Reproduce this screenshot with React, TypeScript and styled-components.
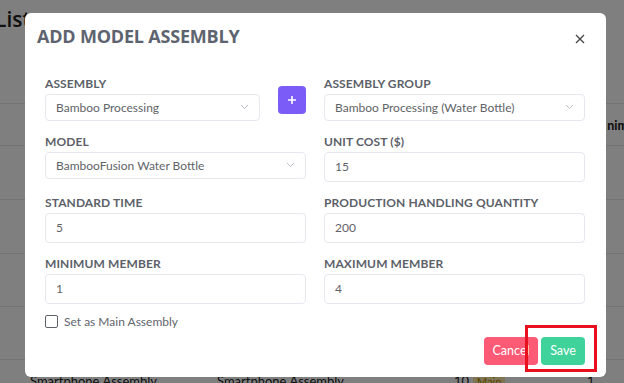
import React from "react";
import styled, { createGlobalStyle } from "styled-components";

const Global = createGlobalStyle`
  html, body { margin: 0; padding: 0; }
  body { width: 624px; height: 383px; overflow: hidden; font-family: "Lato", "Noto Sans", sans-serif; background: #fff; }
  * { box-sizing: border-box; }
`;

const Page = styled.div`
  width: 624px;
  height: 383px;
  overflow: hidden;
  background: #fff;
  position: relative;
`;

const PageTitle = styled.h1`
  margin: 0;
  padding: 5px 0 0 0;
  height: 60px;
  font-family: "Open Sans", sans-serif;
  font-weight: 600;
  font-size: 21px;
  color: #222;
  text-indent: -5px;
`;

const Table = styled.div`
  margin-top: 43px;
  display: flex;
  flex-direction: column;
`;

const TRow = styled.div<{ $h: number }>`
  height: ${(p) => p.$h}px;
  border-top: 1px solid #e6e6e6;
  display: grid;
  grid-template-columns: 30px 187px 237px 133px 1fr;
  align-items: start;
  font-size: 12px;
  color: #222;
`;

const HeadCell = styled.div`
  grid-column: 5;
  justify-self: end;
  font-weight: 700;
  font-size: 12.5px;
  color: #111;
  margin-right: -4px;
  padding-top: 14px;
`;

const Cell = styled.div<{ $end?: boolean }>`
  font-size: 13px;
  color: #222;
  white-space: nowrap;
  padding-top: 13px;
  ${(p) => (p.$end ? "justify-self: end; margin-right: 32px;" : "")}
`;

const Badge = styled.span`
  background: #ffe9a6;
  color: #b08800;
  font-size: 11px;
  padding: 1px 4px;
  margin-left: 4px;
`;

const Overlay = styled.div`
  position: absolute;
  inset: 0;
  background: rgba(0, 0, 0, 0.5);
  padding: 13px 18px 0 25px;
`;

const Modal = styled.div`
  width: 581px;
  height: 364px;
  background: #fff;
  border-radius: 6px;
  display: flex;
  flex-direction: column;
`;

const Header = styled.div`
  display: flex;
  justify-content: space-between;
  align-items: center;
  padding: 0 20px 0 12px;
  height: 45px;
`;

const Title = styled.h2`
  margin: 0;
  font-family: "Open Sans", sans-serif;
  font-weight: 700;
  font-size: 18px;
  letter-spacing: -0.2px;
  color: #5d6470;
`;

const Close = styled.button`
  border: none;
  background: none;
  padding: 0;
  width: 12px;
  height: 12px;
  display: flex;
  margin-top: 6px;
  cursor: pointer;
`;

const Body = styled.div`
  padding: 17.5px 21px 0 20px;
  display: grid;
  grid-template-columns: 261px 261px;
  column-gap: 18px;
  row-gap: 13px;
`;

const Field = styled.div`
  display: flex;
  flex-direction: column;
`;

const FieldWithButton = styled.div`
  display: flex;
  align-items: center;
  gap: 18px;
`;

const Label = styled.label`
  font-size: 12px;
  font-weight: 700;
  color: #5c6169;
  line-height: 16px;
  margin-bottom: 2px;
  letter-spacing: 0.1px;
`;

const SelectBox = styled.div<{ $w?: number }>`
  height: 27px;
  width: ${(p) => (p.$w ? `${p.$w}px` : "100%")};
  border: 1px solid #e6e8f0;
  border-radius: 4px;
  display: flex;
  align-items: center;
  justify-content: space-between;
  padding: 0 10px 0 10px;
  font-size: 12px;
  color: #5f6368;
`;

const Input = styled.div`
  height: 30px;
  border: 1px solid #e6e8f0;
  border-radius: 4px;
  display: flex;
  align-items: center;
  padding: 0 10px;
  font-size: 12px;
  color: #5f6368;
`;

const PlusButton = styled.button`
  width: 29px;
  height: 28px;
  border: none;
  border-radius: 4px;
  background: #7b5cf6;
  color: #fff;
  display: flex;
  align-items: center;
  justify-content: center;
  padding: 0;
  margin-top: 4px;
`;

const CheckRow = styled.div`
  display: flex;
  align-items: center;
  gap: 6px;
  padding: 11px 20px 0 20px;
  font-size: 12px;
  color: #62666d;
  height: 24px;
`;

const Box = styled.span`
  width: 13px;
  height: 13px;
  border: 1.5px solid #5d626a;
  border-radius: 2px;
  display: inline-block;
`;

const Footer = styled.div`
  display: flex;
  justify-content: flex-end;
  gap: 3px;
  padding: 9px 21px 0 0;
`;

const Btn = styled.button<{ $bg: string; $w: number }>`
  position: relative;
  height: 28px;
  width: ${(p) => p.$w}px;
  border: none;
  border-radius: 4px;
  background: ${(p) => p.$bg};
  color: #fff;
  font-family: "Lato", sans-serif;
  font-size: 12.5px;
  padding: 0;
`;

const Highlight = styled.span`
  position: absolute;
  left: -16px;
  top: -12px;
  width: 72px;
  height: 47px;
  border: 3px solid #e8101e;
  pointer-events: none;
`;

const Chevron = () => (
  <svg width="9" height="6" viewBox="0 0 9 6" fill="none">
    <path d="M1 1l3.5 3.5L8 1" stroke="#b9bcc4" strokeWidth="1" />
  </svg>
);

export default function App() {
  return (
    <>
      <Global />
      <Page>
        <PageTitle>List</PageTitle>
        <Table>
          <TRow $h={42}>
            <HeadCell>nim</HeadCell>
          </TRow>
          <TRow $h={54} />
          <TRow $h={54} />
          <TRow $h={53} />
          <TRow $h={53} />
          <TRow $h={40}>
            <span />
            <Cell>Smartphone Assembly</Cell>
            <Cell>Smartphone Assembly</Cell>
            <Cell>
              10<Badge>Main</Badge>
            </Cell>
            <Cell $end>1</Cell>
          </TRow>
        </Table>
        <Overlay>
          <Modal>
            <Header>
              <Title>ADD MODEL ASSEMBLY</Title>
              <Close aria-label="close">
                <svg width="12" height="12" viewBox="0 0 12 12">
                  <path d="M2 2l8 8M10 2l-8 8" stroke="#444" strokeWidth="1.3" />
                </svg>
              </Close>
            </Header>
            <Body>
              <FieldWithButton>
                <Field>
                  <Label>ASSEMBLY</Label>
                  <SelectBox $w={215}>
                    Bamboo Processing
                    <Chevron />
                  </SelectBox>
                </Field>
                <PlusButton aria-label="add">
                  <svg width="10" height="10" viewBox="0 0 10 10">
                    <path d="M5 1v8M1 5h8" stroke="#fff" strokeWidth="1.6" />
                  </svg>
                </PlusButton>
              </FieldWithButton>
              <Field>
                <Label>ASSEMBLY GROUP</Label>
                <SelectBox>
                  Bamboo Processing (Water Bottle)
                  <Chevron />
                </SelectBox>
              </Field>
              <Field>
                <Label>MODEL</Label>
                <SelectBox>
                  BambooFusion Water Bottle
                  <Chevron />
                </SelectBox>
              </Field>
              <Field>
                <Label>UNIT COST ($)</Label>
                <Input>15</Input>
              </Field>
              <Field>
                <Label>STANDARD TIME</Label>
                <Input>5</Input>
              </Field>
              <Field>
                <Label>PRODUCTION HANDLING QUANTITY</Label>
                <Input>200</Input>
              </Field>
              <Field>
                <Label>MINIMUM MEMBER</Label>
                <Input>1</Input>
              </Field>
              <Field>
                <Label>MAXIMUM MEMBER</Label>
                <Input>4</Input>
              </Field>
            </Body>
            <CheckRow>
              <Box />
              Set as Main Assembly
            </CheckRow>
            <Footer>
              <Btn $bg="#fc5a75" $w={54}>Cancel</Btn>
              <Btn $bg="#40d29b" $w={44}>
                Save
                <Highlight />
              </Btn>
            </Footer>
          </Modal>
        </Overlay>
      </Page>
    </>
  );
}
